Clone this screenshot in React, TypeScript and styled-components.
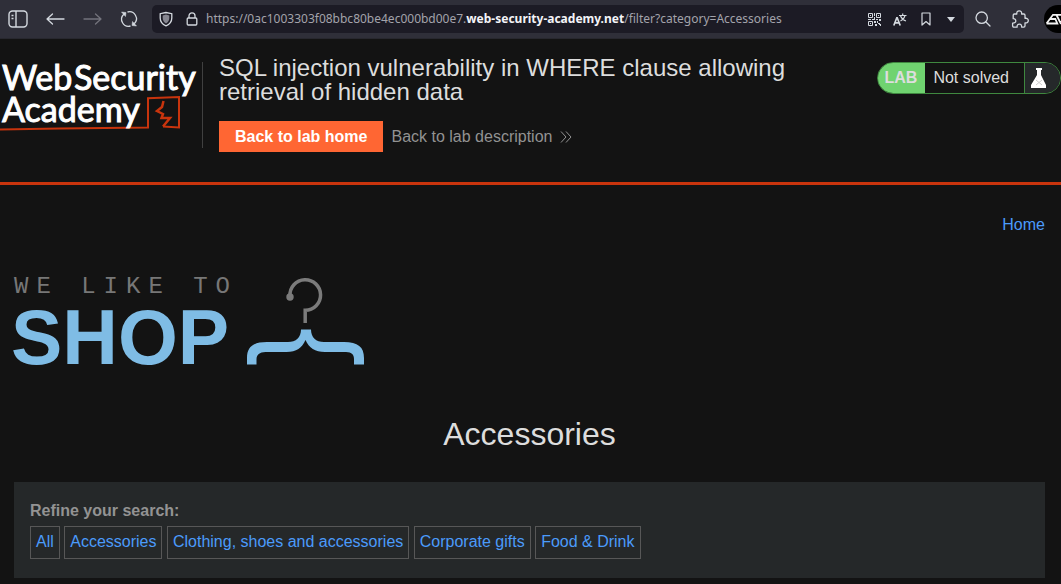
import React from 'react';
import styled, { createGlobalStyle } from 'styled-components';

const GlobalStyle = createGlobalStyle`
  *, *::before, *::after { box-sizing: border-box; }
  html, body { margin: 0; background: #131313; }
  body {
    font-family: "Liberation Sans", Arial, sans-serif;
    font-size: 16px;
    line-height: 20px;
    color: #dddddd;
    overflow-x: hidden;
  }
  h1, h2, p { margin: 0; font-weight: 400; }
  a { color: #4b9bfb; text-decoration: none; }
  button { font: inherit; }
  svg { display: block; flex-shrink: 0; overflow: visible; }
`;

const Toolbar = styled.div`
  display: flex;
  align-items: center;
  height: 39px;
  padding: 0 0 0 4px;
  background: #2f2f39;
  border-bottom: 1px solid #28282f;
  overflow: hidden;
`;

const IconButton = styled.button<{ $width?: number; $dim?: boolean }>`
  display: flex;
  align-items: center;
  justify-content: center;
  flex-shrink: 0;
  width: ${(p) => p.$width ?? 37}px;
  height: 28px;
  padding: 0;
  border: 0;
  background: transparent;
  color: ${(p) => (p.$dim ? '#73737c' : '#d4d9df')};
`;

const AddressBar = styled.div`
  display: flex;
  align-items: center;
  flex: 1;
  min-width: 0;
  height: 28px;
  padding: 0 1px;
  border-radius: 5px;
  background: #1c1b25;
`;

const Address = styled.div`
  flex: 1;
  min-width: 0;
  padding-left: 1px;
  overflow: hidden;
  white-space: nowrap;
  font-family: "Noto Sans", "Open Sans", sans-serif;
  font-size: 12px;
  line-height: 20px;
  color: #a3a3ab;
  outline: none;
  strong { font-weight: 700; color: #f4f4f8; }
`;

const Avatar = styled.button`
  flex-shrink: 0;
  width: 30px;
  height: 28px;
  margin: 0 -13px 0 6px;
  padding: 0;
  border: 0;
  border-radius: 15px;
  background: #000000;
  overflow: hidden;
`;

const LabHeader = styled.header`
  display: flex;
  align-items: flex-start;
  padding: 17px 0 30px;
  border-bottom: 3px solid #c8340d;
`;

const LogoLink = styled.a`
  flex-shrink: 0;
  margin-top: 6px;
  padding-right: 4px;
  border-right: 1px solid #404040;
`;

const TitleBlock = styled.div`
  flex: 1;
  min-width: 0;
  padding-left: 16px;
`;

const Title = styled.h2`
  max-width: 600px;
  font-size: 24px;
  line-height: 24px;
  color: #dddddd;
`;

const LabLinks = styled.div`
  display: flex;
  align-items: center;
  gap: 8px;
  margin-top: 17px;
`;

const HomeButton = styled.button`
  height: 31px;
  padding: 0 16px;
  border: 0;
  background: #ff6633;
  color: #ffffff;
  font-weight: 700;
`;

const DescriptionLink = styled.a`
  display: flex;
  align-items: center;
  gap: 8px;
  color: #929292;
`;

const Status = styled.div`
  display: flex;
  flex-shrink: 0;
  height: 32px;
  margin: 6px 0 0 16px;
  border: 1px solid #3f883f;
  border-radius: 16px;
  line-height: 30px;
  overflow: hidden;
`;

const StatusLabel = styled.span`
  padding: 0 8px 0 7px;
  background: #70d370;
  color: #dddddd;
  font-weight: 700;
`;

const StatusText = styled.p`
  padding: 0 15px 0 8px;
`;

const StatusIcon = styled.span`
  display: flex;
  align-items: center;
  width: 36px;
  padding-left: 5px;
  border-left: 1px solid #3f883f;
  background: #25282a;
`;

const Main = styled.main`
  padding: 30px 16px 6px 14px;
`;

const Nav = styled.nav`
  display: flex;
  justify-content: flex-end;
`;

const ShopLogo = styled.div`
  margin-top: 38px;
`;

const PageTitle = styled.h1`
  margin-top: 43px;
  font-size: 32px;
  line-height: 40px;
  text-align: center;
`;

const Filters = styled.section`
  margin-top: 28px;
  padding: 19px 16px 19px;
  background: #252829;
`;

const FilterLabel = styled.p`
  color: #939393;
  font-weight: 700;
`;

const FilterList = styled.div`
  margin-top: 5px;
`;

const FilterLink = styled.a`
  display: inline-block;
  padding: 5px 5px 6px;
  border: 1px solid #575757;
`;

const categories = ['All', 'Accessories', 'Clothing, shoes and accessories', 'Corporate gifts', 'Food & Drink'];

const line = { fill: 'none', stroke: 'currentColor' } as const;

const SidebarIcon = () => (
  <svg width="20" height="18" viewBox="0 0 20 18" {...line} strokeWidth="1.4">
    <rect x="1" y="1" width="18" height="16" rx="3.5" />
    <path d="M8 1v16M3.5 5.5h2M3.5 8.5h2" />
  </svg>
);

const ArrowIcon = ({ right }: { right?: boolean }) => (
  <svg width="19" height="12" viewBox="0 0 19 12" {...line} strokeWidth="1.3" strokeLinecap="round" strokeLinejoin="round">
    <path d={right ? 'M1 6h17M12.5 1L18 6l-5.5 5' : 'M18 6H1M6.5 1L1 6l5.5 5'} />
  </svg>
);

const ReloadIcon = () => (
  <svg width="18" height="18" viewBox="0 0 18 18" {...line} strokeWidth="1.3">
    <path d="M7.5 2A7 7 0 0 1 14.2 13.8M10.5 16A7 7 0 0 1 3.8 4.2" />
    <path d="M1.5 2l4.5.5-.5 4zM16.5 16l-4.500-.5.5-4z" fill="currentColor" strokeWidth="0.5" />
  </svg>
);

const ShieldIcon = () => (
  <svg width="14" height="16" viewBox="0 0 14 16" {...line} strokeWidth="1.3">
    <path d="M7 1.5L1.2 2.7V7c0 4 2.6 6.5 5.8 7.9C10.2 13.5 12.8 11 12.8 7V2.7z" />
    <path d="M7 3.5L3.7 4.5V7c0 2.6 1.3 4.3 3.3 5.4C9 11.3 10.3 9.6 10.3 7V4.5z" fill="#85858f" stroke="none" />
  </svg>
);

const LockIcon = () => (
  <svg width="12" height="14" viewBox="0 0 12 14" {...line} strokeWidth="1.3">
    <rect x="1.2" y="6" width="9.6" height="7" rx="1" />
    <path d="M3 6V3.8a3 3 0 0 1 6 0V6" />
  </svg>
);

const QrIcon = () => (
  <svg width="13" height="13" viewBox="0 0 13 13" {...line} strokeWidth="1">
    <path d="M.5.5h4v4h-4zM8.5.5h4v4h-4zM.5 8.5h4v4h-4z" />
    <path d="M2 2h1v1H2zM10 2h1v1h-1zM2 10h1v1H2zM6 0h1v3H6zM6 4h1v3H6zM0 6h3v1H0zM4 6h2v1H4zM8 6h2v1H8zM11 6h2v2h-2zM6 8h2v2H6zM9 8h1v2H9zM7 11h2v2H7zM10 10h2v1h-2zM11 11h2v2h-1v-1h-1z" fill="currentColor" stroke="none" />
  </svg>
);

const TranslateIcon = () => (
  <svg width="14" height="13" viewBox="0 0 14 13" {...line}>
    <path d="M.8 12.5L3.8 4.8h.4l3 7.7M2 9.8h4" strokeWidth="1.7" />
    <path d="M6 2.500h7.500M9.700.5v2M12 2.500C11.500 5 9.500 7 7.500 8M7.500 3C8.500 5.500 10.500 7.200 13 8" strokeWidth="1.2" />
  </svg>
);

const BookmarkIcon = () => (
  <svg width="10" height="14" viewBox="0 0 10 14" {...line} strokeWidth="1.2">
    <path d="M1 1h8v12L5 9.5 1 13z" strokeLinejoin="round" />
  </svg>
);

const CaretIcon = () => (
  <svg width="8" height="5" viewBox="0 0 8 5"><path d="M0 0h8L4 5z" fill="currentColor" /></svg>
);

const SearchIcon = () => (
  <svg width="16" height="16" viewBox="0 0 16 16" {...line} strokeWidth="1.3" strokeLinecap="round">
    <circle cx="6.7" cy="6.7" r="5.7" />
    <path d="M10.7 10.7L15 15" />
  </svg>
);

const PuzzleIcon = () => (
  <svg width="18" height="18" viewBox="0 0 18 18" {...line} strokeWidth="1.3" strokeLinejoin="round">
    <path d="M2.2 5.2q0-1.2 1.2-1.2h2.4C5.6 2 6.5.8 8.2.8s2.7 1.2 2.4 3.2h2.2q1.2 0 1.2 1.2v3.1c2-.3 3.300.6 3.300 2.200s-1.300 2.700-3.300 2.400v2.900q0 1.300-1.200 1.300h-2.200c.2-1.900-.6-2.900-2.200-2.900s-2.500 1-2.300 2.900H2.900q-1.300 0-1.300-1.300v-2.700c2 .1 3.200-.8 3.200-2.200S3.800 8.500 2.200 8.700z" />
  </svg>
);

const AvatarArt = () => (
  <svg width="30" height="28" viewBox="0 0 30 28" {...line} stroke="#f2f2f2" strokeWidth="1.800">
    <path d="M2.500 18.500L9 9.800h20M2.500 18.500h10.800l-2-4.500H6.500M12.500 10l4 8 7.500-8M17 14h4" />
  </svg>
);

const AcademyLogo = () => (
  <svg width="198" height="86" viewBox="0 0 198 86" role="img" aria-label="Web Security Academy">
    <path d="M0 67.5L60 66.5 148 65.5V36.2L179 35V65.5L163 64.5" fill="none" stroke="#c8340d" strokeWidth="2" />
    <path d="M163.5 39L162 45 157 49 163 52 161.500 56 170 56 163 64.500" fill="none" stroke="#c8340d" strokeWidth="2.500" />
    <g fill="#ffffff" stroke="#ffffff" strokeWidth="1" fontFamily='Lato, "Liberation Sans", sans-serif' fontSize="34">
      <text x="2" y="28">Web</text>
      <text x="74" y="28">Security</text>
      <text x="2" y="60">Academy</text>
    </g>
  </svg>
);

const ShopArt = () => (
  <svg width="352" height="98" viewBox="0 0 352 98" role="img" aria-label="We like to shop">
    <text x="0" y="20" fill="#777777" fontFamily='"Liberation Mono", monospace' fontSize="24" letterSpacing="8">WE LIKE TO</text>
    <text x="-3" y="91" fill="#7fbce5" fontFamily='"Liberation Sans", sans-serif' fontWeight="700" fontSize="77">SHOP</text>
    <path d="M276 23A15.300 15.300 0 1 1 291.200 37.300V50" fill="none" stroke="#7b7b7b" strokeWidth="3.500" />
    <circle cx="276" cy="24" r="3.700" fill="#7b7b7b" />
    <path d="M286.500 56.500h10.500c0 8 5 12.500 13 12.500h20c14 0 20 5 20 16v6.500h-10V86c0-4-2-7-8-7h-21c-10 0-16-4-19.500-12-3.500 8-9 12-19 12h-21c-6 0-9 3-9 7v5.500h-9.500V85c0-11 6-16 20-16h21c8 0 13-4.500 13-12.500z" fill="#7fbce5" />
  </svg>
);

const FlaskIcon = () => (
  <svg width="18" height="20" viewBox="0 0 18 20">
    <path d="M6 0h6v2h-1v5l5 10v3H1v-3L7 7V2H6z" fill="#ffffff" />
    <path d="M6 12l6 5M12 12l-6 5" stroke="#cccccc" strokeWidth="1" />
  </svg>
);

const ChevronsIcon = () => (
  <svg width="12" height="12" viewBox="0 0 12 12" {...line} strokeWidth="1">
    <path d="M1 .5L6 6l-5 5.500M6 .5L11 6l-5 5.500" />
  </svg>
);

export default function App() {
  return (
    <>
      <GlobalStyle />
      <Toolbar>
        <IconButton $width={28} aria-label="Sidebar"><SidebarIcon /></IconButton>
        <IconButton $width={46} aria-label="Back"><ArrowIcon /></IconButton>
        <IconButton $width={28} $dim aria-label="Forward"><ArrowIcon right /></IconButton>
        <IconButton $width={46} aria-label="Reload"><ReloadIcon /></IconButton>
        <AddressBar>
          <IconButton $width={26} aria-label="Tracking protection"><ShieldIcon /></IconButton>
          <IconButton $width={26} aria-label="Site information"><LockIcon /></IconButton>
          <Address role="textbox" aria-label="Address" contentEditable suppressContentEditableWarning spellCheck={false}>
            https://0ac1003303f08bbc80be4ec000bd00e7.<strong>web-security-academy.net</strong>/filter?category=Accessories
          </Address>
          <IconButton $width={26} aria-label="QR code"><QrIcon /></IconButton>
          <IconButton $width={26} aria-label="Translate"><TranslateIcon /></IconButton>
          <IconButton $width={26} aria-label="Bookmark"><BookmarkIcon /></IconButton>
          <IconButton $width={24} aria-label="More"><CaretIcon /></IconButton>
        </AddressBar>
        <IconButton aria-label="Search"><SearchIcon /></IconButton>
        <IconButton aria-label="Extensions"><PuzzleIcon /></IconButton>
        <Avatar aria-label="Profile"><AvatarArt /></Avatar>
      </Toolbar>

      <LabHeader>
        <LogoLink href="#academy"><AcademyLogo /></LogoLink>
        <TitleBlock>
          <Title>SQL injection vulnerability in WHERE clause allowing retrieval of hidden data</Title>
          <LabLinks>
            <HomeButton>Back to lab home</HomeButton>
            <DescriptionLink href="#description">Back to lab description<ChevronsIcon /></DescriptionLink>
          </LabLinks>
        </TitleBlock>
        <Status>
          <StatusLabel>LAB</StatusLabel>
          <StatusText>Not solved</StatusText>
          <StatusIcon><FlaskIcon /></StatusIcon>
        </Status>
      </LabHeader>

      <Main>
        <Nav><a href="#home">Home</a></Nav>
        <ShopLogo><ShopArt /></ShopLogo>
        <PageTitle>Accessories</PageTitle>
        <Filters>
          <FilterLabel>Refine your search:</FilterLabel>
          <FilterList>
            {categories.map((name) => (
              <React.Fragment key={name}>
                <FilterLink href={`#${encodeURIComponent(name)}`}>{name}</FilterLink>{' '}
              </React.Fragment>
            ))}
          </FilterList>
        </Filters>
      </Main>
    </>
  );
}
